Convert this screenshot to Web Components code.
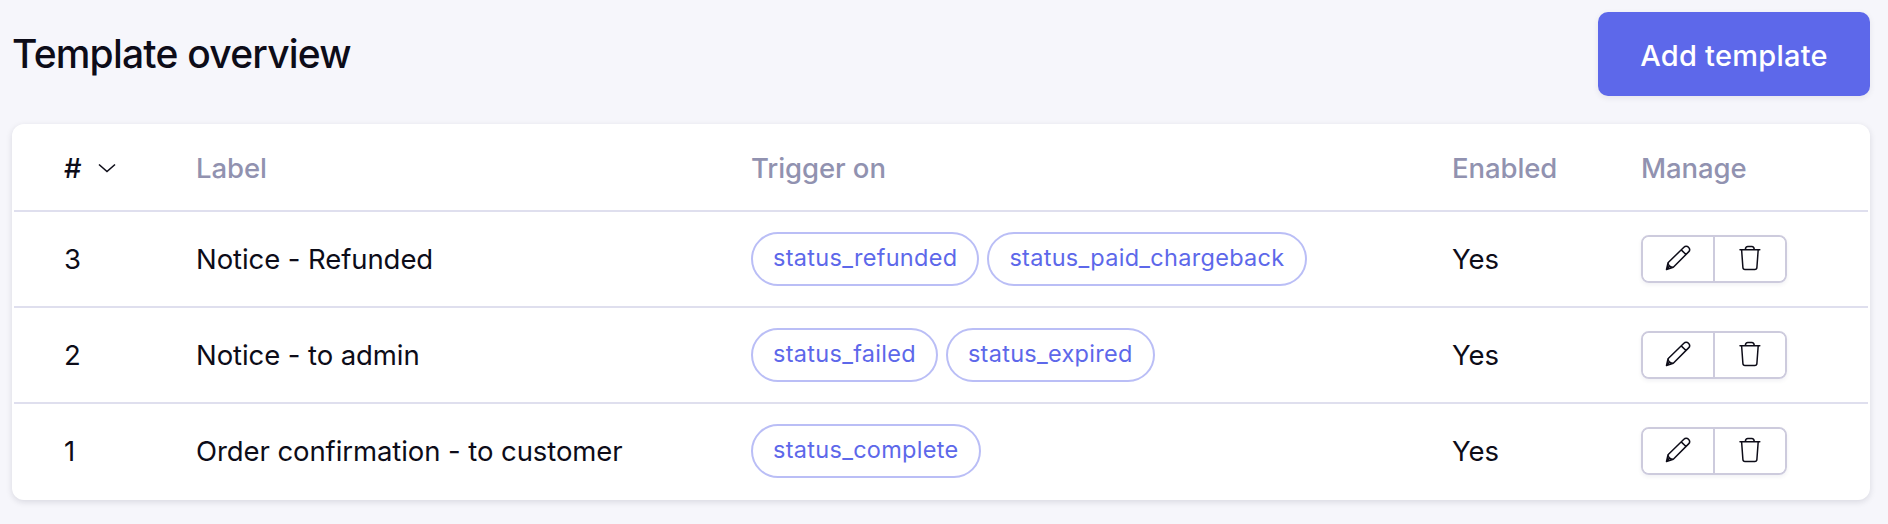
<!DOCTYPE html>
<html lang="en">
<head>
<meta charset="utf-8">
<title>Template overview</title>
<style>
  body {
    margin: 0;
    min-height: 524px;
    background: #f6f6fb;
    color: #0d0c18;
    font-family: Inter, 'Noto Sans', sans-serif;
    font-size: 27.5px;
    letter-spacing: -0.08px;
  }
</style>
</head>
<body>
<template-overview></template-overview>

<script>
var TEMPLATES = [
  { id: 3, label: 'Notice - Refunded', triggers: ['status_refunded', 'status_paid_chargeback'], enabled: true },
  { id: 2, label: 'Notice - to admin', triggers: ['status_failed', 'status_expired'], enabled: true },
  { id: 1, label: 'Order confirmation - to customer', triggers: ['status_complete'], enabled: true },
];

/** ui-button - Primary action button, label in the default slot. */
class UiButton extends HTMLElement {
  constructor() {
    super();
    this.attachShadow({ mode: 'open' });
    this.shadowRoot.innerHTML = `
      <style>
        :host { display: block; }
        button {
          display: flex;
          align-items: center;
          justify-content: center;
          width: 272px;
          height: 84px;
          padding: 2px 0 0;
          border: none;
          border-radius: 10px;
          background: #5d68ea;
          box-shadow: 0 2px 6px rgba(20, 20, 60, 0.08);
          color: #fff;
          font: 500 29px/1 Inter, sans-serif;
          letter-spacing: 0.25px;
          cursor: pointer;
          box-sizing: border-box;
        }
      </style>
      <button type="button"><slot></slot></button>
    `;
  }
}

/** trigger-chip - Outlined pill with the name of a trigger. */
class TriggerChip extends HTMLElement {
  constructor() {
    super();
    this.attachShadow({ mode: 'open' });
    this.shadowRoot.innerHTML = `
      <style>
        :host {
          display: inline-flex;
          align-items: center;
          height: 54px;
          padding: 0 20px 4px;
          border: 2px solid #babef6;
          border-radius: 27px;
          box-sizing: border-box;
          color: #5d68ea;
          font-size: 23.5px;
          letter-spacing: 0.29px;
          white-space: nowrap;
        }
      </style>
      <slot></slot>
    `;
  }
}

/** row-actions - Edit and delete button pair. */
class RowActions extends HTMLElement {
  constructor() {
    super();
    this.attachShadow({ mode: 'open' });
    this.shadowRoot.innerHTML = `
      <style>
        :host { display: block; }
        .group {
          display: flex;
          width: 146px;
          height: 48px;
          border: 2px solid #cdcbdd;
          border-radius: 8px;
          box-sizing: border-box;
          box-shadow: 0 2px 4px rgba(20, 20, 60, 0.06);
          overflow: hidden;
        }
        button {
          flex: 1;
          display: flex;
          align-items: center;
          justify-content: center;
          padding: 0 0 2px;
          border: none;
          background: #fff;
          color: #0d0c18;
          cursor: pointer;
        }
        button + button { border-left: 2px solid #cdcbdd; }
        svg {
          width: 26px;
          height: 26px;
          fill: none;
          stroke: currentColor;
          stroke-width: 1.5;
          stroke-linejoin: round;
          stroke-linecap: round;
        }
      </style>
      <div class="group">
        <button type="button" aria-label="Edit">
          <svg viewBox="0 0 26 26"><path d="M1.5 24.5 3 17.8 18.9 2.2C20.3.8 22.1.9 23.5 2.3 24.9 3.7 25 5.5 23.6 6.9L8.3 22.2 1.5 24.5ZM3 17.8C3.4 20.6 5.6 22.2 8.3 22.2M16.2 4.9 21 9.5M1.5 24.5 4 21.5"/></svg>
        </button>
        <button type="button" aria-label="Delete">
          <svg viewBox="0 0 26 26"><path d="M3 4.7H22.8M8.3 4.7C8.5 2.6 9.3 1.6 10.8 1.6H14.8C16.3 1.6 17.1 2.6 17.3 4.7M4.6 4.7 5.9 22.5C6 23.8 6.8 24.5 8 24.5H17.8C19 24.5 19.8 23.8 19.9 22.5L21.2 4.7"/></svg>
        </button>
      </div>
    `;
  }
}

/** template-row - Table line with one slot per column. */
class TemplateRow extends HTMLElement {
  constructor() {
    super();
    this.attachShadow({ mode: 'open' });
    this.shadowRoot.innerHTML = `
      <style>
        :host {
          display: grid;
          grid-template-columns: 132px 555px 701px 189px 1fr;
          align-items: center;
          height: 96px;
          margin: 0 2px;
          padding-left: 50px;
          border-bottom: 2px solid #dfdfee;
          box-sizing: border-box;
        }
        :host([head]) {
          height: 88px;
          padding-top: 2px;
          color: #9192b0;
          font-weight: 500;
        }
        :host(:last-child) { border-bottom-color: transparent; }
        .chips { display: flex; gap: 8px; }
      </style>
      <div><slot name="id"></slot></div>
      <div><slot name="label"></slot></div>
      <div class="chips"><slot name="triggers"></slot></div>
      <div><slot name="enabled"></slot></div>
      <div><slot name="manage"></slot></div>
    `;
  }
}

/** template-overview - Page title, add button and the table card. */
class TemplateOverview extends HTMLElement {
  constructor() {
    super();
    this.attachShadow({ mode: 'open' });
  }

  connectedCallback() {
    this.render();
  }

  render() {
    var rows = TEMPLATES.map((item) => `
      <template-row>
        <span slot="id">${item.id}</span>
        <span slot="label">${item.label}</span>
        ${item.triggers.map((name) => `<trigger-chip slot="triggers">${name}</trigger-chip>`).join('')}
        <span slot="enabled">${item.enabled ? 'Yes' : 'No'}</span>
        <row-actions slot="manage"></row-actions>
      </template-row>
    `).join('');

    this.shadowRoot.innerHTML = `
      <style>
        :host {
          display: block;
          padding: 12px 18px 24px 12px;
        }
        header {
          display: flex;
          align-items: center;
          justify-content: space-between;
          margin-bottom: 28px;
        }
        h1 {
          margin: 0;
          padding-bottom: 2px;
          font-size: 39px;
          font-weight: 500;
          letter-spacing: -0.78px;
        }
        .card {
          background: #fff;
          border-radius: 12px;
          box-shadow: 0 2px 6px rgba(20, 20, 50, 0.13);
        }
        .sort {
          display: flex;
          align-items: center;
          gap: 17px;
          color: #0d0c18;
        }
        .sort svg {
          width: 18px;
          height: 10px;
          fill: none;
          stroke: currentColor;
          stroke-width: 1.6;
        }
      </style>
      <header>
        <h1>Template overview</h1>
        <ui-button>Add template</ui-button>
      </header>
      <section class="card">
        <template-row head>
          <span slot="id" class="sort">#<svg viewBox="0 0 18 10"><path d="M1 1.5 9 8.5 17 1.5"/></svg></span>
          <span slot="label">Label</span>
          <span slot="triggers">Trigger on</span>
          <span slot="enabled">Enabled</span>
          <span slot="manage">Manage</span>
        </template-row>
        ${rows}
      </section>
    `;
  }
}

customElements.define('ui-button', UiButton);
customElements.define('trigger-chip', TriggerChip);
customElements.define('row-actions', RowActions);
customElements.define('template-row', TemplateRow);
customElements.define('template-overview', TemplateOverview);
</script>
</body>
</html>
